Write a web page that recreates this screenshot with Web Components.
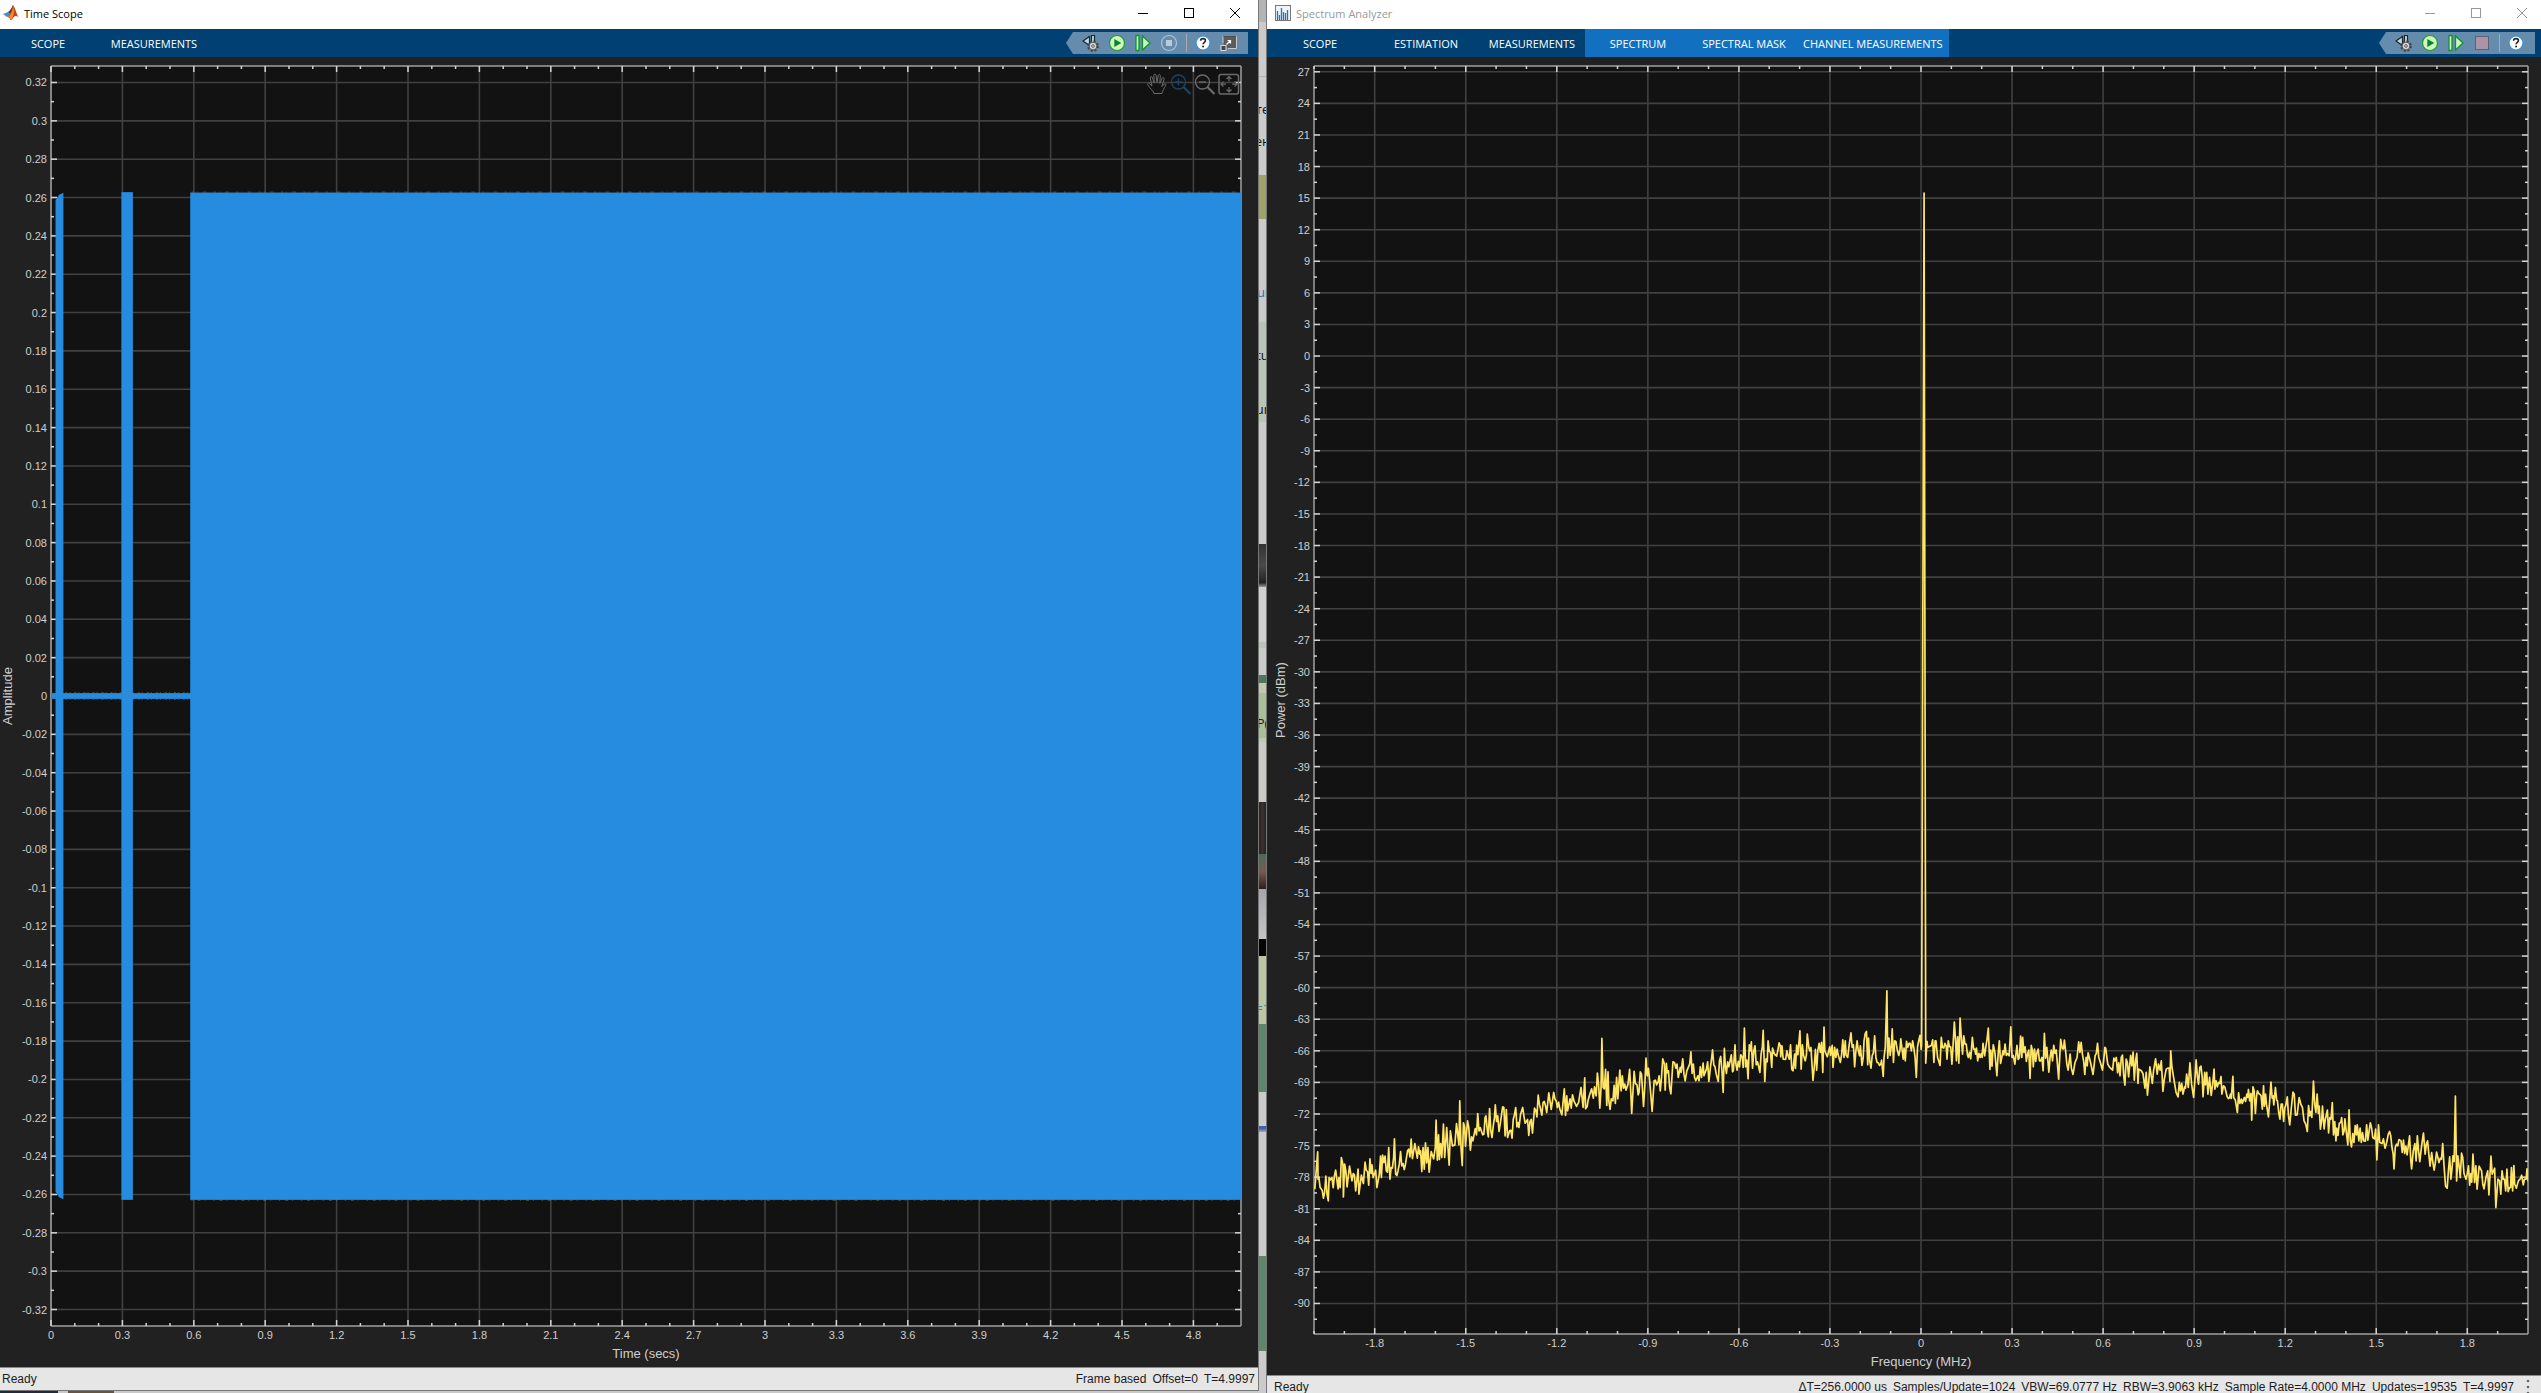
<!DOCTYPE html>
<html lang="en">
<head>
<meta charset="utf-8">
<title>Time Scope and Spectrum Analyzer</title>
<style>
  html, body { margin: 0; height: 100%; overflow: hidden; background: #c9c9c9; }
  body { font-family: "Liberation Sans", Arial, sans-serif; font-size: 12px; }
</style>
</head>
<body>
<scope-desktop>
  <scope-window slot="left" heading="Time Scope" logo="matlab">
    <tool-strip slot="strip" tabs="SCOPE,MEASUREMENTS" tools="settings,play,step,stopring,|,help,undock"></tool-strip>
    <axes-plot slot="plot" kind="time" controls></axes-plot>
    <status-bar slot="status" items="Frame based;Offset=0;T=4.9997"></status-bar>
  </scope-window>
  <desktop-sliver slot="gap"></desktop-sliver>
  <scope-window slot="right" heading="Spectrum Analyzer" logo="bars" inactive>
    <tool-strip slot="strip" tabs="SCOPE,ESTIMATION,MEASUREMENTS,*SPECTRUM,*SPECTRAL MASK,*CHANNEL MEASUREMENTS" tools="settings,play,step,stopbox,|,help"></tool-strip>
    <axes-plot slot="plot" kind="spectrum"></axes-plot>
    <status-bar slot="status" menu items="ΔT=256.0000 us;Samples/Update=1024;VBW=69.0777 Hz;RBW=3.9063 kHz;Sample Rate=4.0000 MHz;Updates=19535;T=4.9997"></status-bar>
  </scope-window>
</scope-desktop>

<script>
const ICONS = {
  matlab: `<svg width="16" height="16" viewBox="0 0 16 16"><path d="M0 9l5-2 2 2-3 3z" fill="#4a90c8"/><path d="M5 7c2-1 3-4 5-6L7 10l-3 2 3-3z" fill="#23406b"/><path d="M10 0c2 2 3 8 5.500 12-3-2-4-1-5.500 1C9 15 8 15 7 15c0-2-1-3-3-3 3-1 4-8 6-12z" fill="#c8401c"/><path d="M10 0c-1 6-1 9-5 12 2 0 2.500 1.500 2.500 3 2-1 3-4 3.500-8z" fill="#ef8a32"/><path d="M10 0c-1 2-1.500 5-3 8 1 0 2-2 3-8z" fill="#7a1f16"/></svg>`,
  bars: `<svg width="16" height="16" viewBox="0 0 16 16"><rect x=".5" y=".5" width="15" height="15" fill="#eef4f8" stroke="#777"/><path d="M2.500 6v9M4.500 10v5M6.500 3v12M8.500 7v8M10.500 8v7M12.500 5v10" stroke="#2277b5" stroke-width="1.300"/></svg>`,
  settings: `<svg width="18" height="18" viewBox="0 0 18 18"><path d="M7.500 2.500v9L1 7z" fill="#b9dcf5" stroke="#222" stroke-width="1.200"/><path d="M9.500 1.500h3v7h-3z" fill="#b9dcf5" stroke="#222" stroke-width="1.200"/><g transform="translate(11 12)"><circle r="4.600" fill="none" stroke="#444" stroke-width="2.600" stroke-dasharray="2 1.610"/><circle r="3.900" fill="#d5d5d5" stroke="#444" stroke-width=".9"/><circle r="1.300" fill="#fff" stroke="#444" stroke-width=".9"/></g></svg>`,
  play: `<svg width="18" height="18" viewBox="0 0 18 18"><circle cx="9" cy="9" r="7.500" fill="#ccf7bf" stroke="#1d9b2c" stroke-width="1.200"/><path d="M6.300 5l7 4-7 4z" fill="#0b8424"/></svg>`,
  step: `<svg width="18" height="18" viewBox="0 0 18 18"><path d="M2 1.500h3v15H2zM8.500 2l7.500 7-7.500 7z" fill="#ccf7bf" stroke="#0f9427" stroke-width="1.300"/></svg>`,
  stopring: `<svg width="18" height="18" viewBox="0 0 18 18"><circle cx="9" cy="9" r="7.500" fill="none" stroke="#a9c3da" stroke-width="1.200"/><rect x="6" y="6" width="6" height="6" fill="#b9cad9"/></svg>`,
  stopbox: `<svg width="18" height="18" viewBox="0 0 18 18"><rect x="2.500" y="2.500" width="13" height="13" fill="#ab94a6" stroke="#5f6076"/></svg>`,
  help: `<svg width="18" height="18" viewBox="0 0 18 18"><circle cx="9" cy="9" r="7" fill="#fff" stroke="#3b8fd8" stroke-width="1.200"/><path d="M6.600 6.800q0-2.200 2.400-2.200t2.400 2q0 1.200-1.300 2-1 .6-1 1.700" fill="none" stroke="#222" stroke-width="1.600"/><circle cx="9.100" cy="12.600" r="1" fill="#222"/></svg>`,
  undock: `<svg width="18" height="18" viewBox="0 0 18 18"><path d="M3 9.500V1.500h13.500v13H8" fill="#5c5c5c" stroke="#c8c8c8"/><path d="M3 2h13.500" stroke="#444"/><rect x="1" y="11.500" width="5" height="5" fill="#444" stroke="#ddd"/><path d="M6.500 10.500l4-4M7.500 6.500h3v3" fill="none" stroke="#fff" stroke-width="1.200"/></svg>`,
  hand: `<svg width="22" height="22" viewBox="0 0 22 22"><path d="M8 20.500c-1-3-4-5-6.500-9 0-1.500 1.500-1.500 2.200-.8L6 13 4.200 4.800c0-1.500 1.800-1.500 2.200-.2L8.200 10 7.800 2.300c.2-1.500 2-1.500 2.300 0L11 9.500l1.200-7c.4-1.400 2.100-1.200 2.100.3l-.5 7.400 2.400-5c.7-1.200 2.300-.5 1.900.9l-2.300 7.400 2.300-2.400c1.200-.8 2.200.3 1.500 1.500-2 3-2.600 5-3.600 7.900z" fill="none" stroke="currentColor"/></svg>`,
  zoomin: `<svg width="22" height="22" viewBox="0 0 22 22"><circle cx="8.500" cy="9" r="7" fill="none" stroke="currentColor" stroke-width="1.300"/><path d="M5 9h7M8.500 5.500v7" stroke="currentColor" stroke-width="1.300"/><path d="M13.500 14l7 7" stroke="currentColor" stroke-width="2.200"/></svg>`,
  zoomout: `<svg width="22" height="22" viewBox="0 0 22 22"><circle cx="8.500" cy="9" r="7" fill="none" stroke="currentColor" stroke-width="1.300"/><path d="M5 9h7" stroke="currentColor" stroke-width="1.300"/><path d="M13.500 14l7 7" stroke="currentColor" stroke-width="2.200"/></svg>`,
  fit: `<svg width="22" height="22" viewBox="0 0 22 22"><rect x="1" y="1.500" width="19.500" height="19.500" rx="2" fill="none" stroke="currentColor" stroke-width="1.500"/><path d="M11 3.500v5M8.500 6L11 3.500 13.500 6M11 19v-5M8.500 16.500L11 19l2.500-2.500M3 11.200h5M5.500 8.700L3 11.200l2.500 2.500M19 11.200h-5M16.500 8.700l2.500 2.500-2.500 2.500" fill="none" stroke="currentColor" stroke-width="1.200"/></svg>`,
  min: `<svg width="12" height="12" viewBox="0 0 12 12"><path d="M1 6.500h10" stroke="currentColor"/></svg>`,
  max: `<svg width="12" height="12" viewBox="0 0 12 12"><rect x="1.500" y="1.500" width="9" height="9" fill="none" stroke="currentColor"/></svg>`,
  close: `<svg width="12" height="12" viewBox="0 0 12 12"><path d="M1 1l10 10M11 1L1 11" stroke="currentColor"/></svg>`
};
const NAMES = { settings: 'Settings', play: 'Run', step: 'Step forward', stopring: 'Stop', stopbox: 'Stop', help: 'Help', undock: 'Undock', hand: 'Pan', zoomin: 'Zoom in', zoomout: 'Zoom out', fit: 'Fit to view', min: 'Minimize', max: 'Maximize', close: 'Close' };
const iconButton = n => `<button type="button" aria-label="${NAMES[n]}" class="${n}">${ICONS[n]}</button>`;
const RESET = `:host,*{box-sizing:border-box} button{appearance:none;border:0;background:none;padding:0;margin:0;color:inherit;font:inherit;display:flex;align-items:center;justify-content:center} svg{display:block}`;

class ScopeElement extends HTMLElement {
  constructor() { super(); this.attachShadow({ mode: 'open' }); }
  connectedCallback() { this.shadowRoot.innerHTML = `<style>${RESET}</style>` + this.view(); }
}

customElements.define('scope-desktop', class extends ScopeElement {
  view() {
    return `<style>
      :host{display:grid;grid-template-columns:minmax(0,1259fr) 7px minmax(0,1275fr);height:100vh;overflow:hidden}
      .left{display:flex;flex-direction:column;min-height:0;margin-left:-5px}
      .left slot{display:flex;flex:1;min-height:0}
      .under{flex:none;height:2px;margin-left:5px;display:flex;gap:10px}
      .under i{height:2px;background:#1f2a3d;width:58px}.under i+i{background:#6b5238;width:46px}
      .right{display:flex;min-height:0;margin:0 -4px -5px 0}
      .gap{display:flex;min-height:0;overflow:hidden}
      ::slotted(*){flex:1;min-width:0;min-height:0}
    </style>
    <div class="left"><slot name="left"></slot><div class="under"><i></i><i></i></div></div>
    <div class="gap"><slot name="gap"></slot></div>
    <div class="right"><slot name="right"></slot></div>`;
  }
});

/* The narrow piece of the desktop that shows between the two windows. */
customElements.define('desktop-sliver', class extends ScopeElement {
  view() {
    const parts = [
      [22,'#b4b4b4'],[54,'#cbcbcb'],[1,'#b0b0b0'],[24,'#cbcbcb'],[16,'#cbcbcb',['те','#111']],[16,'#cbcbcb'],[16,'#cbcbcb',['ен','#111']],[26,'#cbcbcb'],
      [44,'#9fa36a'],[65,'#cacaca'],[16,'#cacaca',['ui','#2a72b5']],[22,'#cacaca'],[25,'#b8c6b7'],[16,'#b8c6b7',['tu','#111']],[38,'#b8c6b7'],[16,'#b8c6b7',['ur','#111']],[5,'#b8c6b7'],
      [122,'#cbcbcb'],[43,'linear-gradient(#333,#4a4a4a 50%,#222 90%,#999)'],[55,'#cfcfd2'],[6,'#b9c6b5'],[27,'#cbcbcb'],
      [8,'#4a7a5c'],[10,'#c0c9ae'],[22,'#a9bf98'],[16,'#a9bf98',['P(','#14202e']],[7,'#a9bf98'],[4,'#c0c9ae'],[60,'#cbcbc6'],
      [52,'linear-gradient(90deg,#252525,#3c3030,#222)'],[35,'linear-gradient(#4a6a5c,#7a5a50,#2a2020)'],[50,'linear-gradient(#a5a7aa,#c2c4c6)'],[17,'#060606'],
      [44,'#bcc6a5'],[16,'#bcc6a5',['=1','#2a86b8']],[8,'#bcc6a5'],[68,'#5d866b'],[34,'#cbcbcb'],[6,'linear-gradient(#3f62b0 40%,#a8a8a8)'],[124,'#cbcbcb'],[95,'#5d866b'],[42,'#cbcbcb']
    ];
    return `<style>
      :host{display:flex;flex-direction:column;overflow:hidden;font:13px "Open Sans",sans-serif}
      div{display:flex;align-items:center;justify-content:center;min-height:0;overflow:hidden;white-space:nowrap;line-height:16px}
    </style>` + parts.map(([h, c, t]) => `<div style="flex:${h} 1 0;background:${c}${t ? ';color:' + t[1] : ''}">${t ? `<span>${t[0]}</span>` : ''}</div>`).join('');
  }
});

customElements.define('scope-window', class extends ScopeElement {
  view() {
    return `<style>
      :host{display:grid;grid-template-rows:29px 28px minmax(0,1fr) auto;background:#212121;border-right:1px solid #777;border-bottom:1px solid #777}
      :host([inactive]){border:0;border-left:1px solid #777}
      header{display:flex;align-items:center;background:#fff;color:#000;padding-left:8px;height:29px}
      :host([inactive]) header{color:#999}
      h1{font:11px/16px "Open Sans",sans-serif;margin:0 0 0 5px;padding-bottom:2px;flex:1;white-space:nowrap}
      header > svg{flex:none;margin-top:-3px}
      header button{width:46px;height:26px;align-self:flex-start}
      ::slotted(*){min-width:0;min-height:0}
    </style>
    <header>${ICONS[this.getAttribute('logo')]}<h1>${this.getAttribute('heading')}</h1>${['min', 'max', 'close'].map(iconButton).join('')}</header>
    <slot name="strip"></slot><slot name="plot"></slot><slot name="status"></slot>`;
  }
});

customElements.define('tool-strip', class extends ScopeElement {
  view() {
    const tabs = this.getAttribute('tabs').split(',').map(t => t[0] === '*'
      ? `<button type="button" role="tab" class="ctx">${t.slice(1)}</button>` : `<button type="button" role="tab">${t}</button>`).join('');
    const tools = this.getAttribute('tools').split(',').map(t => t === '|' ? '<i></i>' : iconButton(t)).join('');
    return `<style>
      :host{display:flex;align-items:center;justify-content:space-between;background:#004072;color:#fff}
      nav{display:flex;height:100%}
      nav button{min-width:106px;padding:2px 6px 0;font:11px/16px "Open Sans",sans-serif;white-space:nowrap}
      nav .ctx{background:#1171c0}
      .tools{display:flex;align-items:center;height:22px;margin-right:10px;padding:0 6px 0 12px;background:#668cad;clip-path:polygon(7px 0,100% 0,100% 100%,7px 100%,0 50%)}
      .tools button{width:26px;height:22px}
      .tools i{width:1px;height:18px;margin:0 3px 0 4px;background:#b0a8a4}
    </style><nav role="tablist">${tabs}</nav><div class="tools">${tools}</div>`;
  }
});

customElements.define('status-bar', class extends ScopeElement {
  view() {
    const items = this.getAttribute('items').split(';').map(t => `<span>${t}</span>`).join('');
    return `<style>
      :host{display:flex;align-items:center;height:23px;background:#e6e6e6;border-top:1px solid #8a8a8a;color:#1c1c1c;font-size:12px;line-height:16px;padding:0 3px 0 7px;white-space:nowrap}
      .info{display:flex;gap:6px;margin-left:auto}
      .menu{width:28px;height:20px}
    </style><span>Ready</span><div class="info">${items}</div>${this.hasAttribute('menu')
      ? `<button type="button" class="menu" aria-label="More"><svg width="4" height="18" fill="#666"><circle cx="2" cy="3" r="1.300"/><circle cx="2" cy="9" r="1.300"/><circle cx="2" cy="15" r="1.300"/></svg></button>` : ''}`;
  }
});

/* Power trace, negative-frequency side and positive-frequency side. */
const TRACE_A = `37,685 44,573 45,655 47,650 50,680 55,688 58,712 61,695 64,646 67,700 70,720 72,650 75,657 79,650 82,680 85,645 88,628 94,684 96,650 99,680 102,590 106,612 107,708 110,610 113,630 116,678 122,616 128,660 131,638 134,642 137,690 143,625 145,700 151,643 156,668 160,604 163,628 166,632 169,673 172,594 175,638 177,612 180,650 186,628 189,680 195,640 198,586 200,650 203,583 206,605 209,586 212,630 215,634 218,560 221,655 224,620 227,622 230,590 232,534 235,640 238,644 241,628 244,610 247,572 250,615 253,608 256,626 259,610 264,570 267,565 270,588 273,535 276,593 282,548 288,592 291,558 294,580 296,570 299,632 302,560 305,625 308,546 311,606 314,560 317,634 322,572 328,594 332,560 334,478 337,598 340,522 342,596 345,548 348,590 352,490 355,590 360,500 363,560 366,613 369,510 374,555 380,552 384,488 390,552 392,420 395,560 398,614 401,486 404,500 406,556 411,480 414,500 418,568 421,528 424,540 430,503 433,522 436,458 439,510 442,500 448,522 451,520 454,470 456,465 460,515 462,528 465,443 468,510 471,530 474,495 477,470 479,432 482,482 485,465 488,512 491,490 497,438 500,440 503,525 506,446 509,530 514,510 517,508 520,532 523,475 526,462 529,440 532,498 535,485 537,500 541,460 546,440 549,465 552,487 555,482 558,476 561,524 564,482 567,476 570,517 575,442 578,448 581,468 584,403 587,430 593,463 596,425 599,422 602,436 605,455 610,396 616,446 622,395 625,415 628,420 631,440 634,424 637,445 642,462 648,384 651,464 654,405 656,450 662,414 665,442 668,402 672,422 678,437 683,425 689,380 694,440 698,351 700,444 704,437 706,420 710,402 715,384 719,412 722,378 726,405 729,337 732,372 735,442 738,380 740,233 743,380 746,384 749,326 752,434 755,333 757,420 760,446 763,414 767,420 770,374 773,428 776,350 779,414 784,328 787,390 790,345 793,382 796,370 799,388 804,370 808,326 811,400 813,458 819,332 822,368 826,372 829,402 831,395 834,333 837,340 842,437 845,380 848,292 851,345 854,323 857,360 860,405 863,452 868,360 871,358 874,372 878,362 880,345 883,390 886,350 889,294 893,310 895,388 898,308 900,336 903,330 906,380 909,399 914,303 918,306 921,322 924,310 927,350 932,320 934,335 938,294 941,340 944,360 948,330 955,310 958,273 961,338 964,310 967,350 970,360 975,345 978,360 981,318 984,350 988,307 990,345 996,325 999,303 1002,362 1006,318 1008,300 1011,267 1014,312 1017,318 1020,340 1025,362 1028,300 1031,287 1034,330 1037,395 1040,263 1042,310 1045,338 1048,303 1051,318 1057,282 1060,333 1062,330 1066,252 1068,308 1071,328 1074,302 1077,318 1080,282 1084,290 1086,320 1089,202 1092,318 1095,298 1098,354 1101,252 1104,270 1106,243 1109,322 1112,270 1115,255 1118,312 1121,303 1124,318 1127,335 1130,280 1133,258 1135,209 1139,362 1142,294 1145,303 1147,240 1150,272 1153,275 1156,320 1158,262 1161,275 1164,282 1168,286 1171,268 1174,246 1177,255 1178,288 1181,255 1184,295 1190,296 1193,270 1196,285 1199,295 1202,252 1205,325 1208,330 1212,280 1214,323 1217,253 1220,282 1225,210 1228,325 1231,252 1234,285 1238,300 1241,282 1243,220 1247,262 1249,270 1252,260 1255,320 1257,359 1260,320 1263,266 1266,328 1269,268 1272,248 1275,275 1278,245 1281,335 1284,199 1286,270 1292,288 1298,258 1300,284 1304,254 1306,320 1310,260 1313,290 1316,265 1318,280 1324,305 1327,282 1330,237 1333,290 1336,240 1338,283 1342,290 1345,258 1350,216 1353,260 1356,252 1359,318 1362,270 1365,240 1368,270 1371,285 1373,255 1377,314 1380,290 1382,240 1385,218 1388,212 1391,312 1393,232 1396,302 1399,322 1402,285 1405,275 1408,225 1411,290 1414,305 1417,306 1420,314 1423,310 1425,298 1429,347 1431,290 1434,260 1438,90 1440,292 1443,232 1446,284 1449,255 1451,204 1454,305 1457,240 1460,242 1463,265 1467,284 1470,268 1472,234 1475,265 1478,295 1480,262 1483,300 1486,242 1489,260 1492,248 1495,248 1498,270 1501,240 1504,262 1507,290 1510,350 1513,258 1516,240 1519,224 1522,266 1523,250 1529,-2301`;
const TRACE_B = `63,307 66,242 68,260 73,256 77,254 80,237 83,305 86,240 88,240 92,290 98,314 101,230 104,260 107,262 110,248 113,255 115,295 118,240 121,258 124,258 127,310 130,250 133,184 136,240 138,300 141,228 144,307 147,172 150,230 153,280 156,225 159,250 162,250 165,282 167,290 170,275 173,294 177,230 180,265 183,265 185,280 187,262 190,300 193,278 196,290 199,278 201,290 203,248 207,285 210,258 213,235 216,202 220,326 222,268 225,316 228,252 232,275 237,345 240,280 243,240 246,308 249,290 252,270 254,282 257,250 260,284 263,278 267,285 271,198 274,290 277,284 281,310 286,254 289,296 292,290 295,226 298,290 300,230 303,275 306,258 309,302 312,280 315,268 318,353 321,254 324,270 326,318 329,265 332,302 335,275 338,265 341,300 344,300 347,290 350,330 353,218 356,292 359,260 362,305 364,334 367,290 370,268 373,300 376,254 379,278 382,268 385,310 388,355 391,280 393,236 397,264 400,264 402,238 405,270 408,310 411,328 416,280 419,322 423,341 428,305 433,290 437,243 440,275 443,245 446,280 449,300 452,341 455,290 458,315 460,276 466,305 472,341 475,310 477,285 480,278 483,248 486,290 490,305 495,328 498,300 501,260 503,262 508,310 513,320 520,328 523,292 526,300 529,290 532,336 535,306 538,345 541,290 544,283 547,345 550,373 553,295 556,305 559,348 562,310 564,284 567,315 570,274 573,358 576,300 579,278 582,368 584,325 590,330 594,338 599,382 602,335 605,403 608,365 611,318 617,368 620,330 625,294 629,340 632,310 636,328 639,300 643,392 646,358 651,325 655,322 658,322 660,362 662,270 665,320 669,350 675,395 680,408 683,365 686,390 689,368 692,400 696,378 698,382 701,340 705,380 709,306 713,370 718,410 721,360 724,297 727,345 730,370 733,320 736,316 739,350 741,408 745,335 747,372 750,335 753,400 757,350 761,404 765,365 768,325 770,385 773,360 776,378 779,365 782,368 785,347 787,400 791,375 794,378 800,408 803,413 806,410 808,400 810,413 814,347 816,410 820,418 825,455 828,396 831,428 835,415 837,428 842,410 845,422 848,400 850,410 852,386 855,420 858,398 860,478 863,378 866,390 869,458 872,405 874,390 877,398 880,400 883,405 886,445 889,375 891,436 894,400 896,430 901,468 904,420 907,364 910,412 912,405 914,432 918,380 921,418 923,420 926,455 929,475 932,430 935,430 938,482 941,440 943,436 947,408 950,465 953,492 957,440 961,394 964,400 967,463 971,462 976,410 980,430 984,440 988,480 992,490 996,512 999,434 1002,465 1005,452 1007,470 1011,361 1014,430 1017,455 1020,400 1023,458 1025,436 1028,505 1031,480 1033,436 1037,504 1040,475 1045,448 1048,516 1051,470 1054,475 1057,425 1060,522 1063,482 1066,540 1068,502 1071,524 1074,488 1078,484 1080,470 1083,522 1086,510 1088,474 1091,510 1095,552 1098,447 1101,540 1104,558 1107,518 1110,545 1113,494 1116,522 1118,492 1122,540 1125,502 1128,545 1131,515 1134,540 1138,541 1141,492 1144,538 1150,486 1153,500 1156,530 1160,534 1163,505 1166,597 1170,492 1173,545 1179,548 1182,534 1186,562 1190,545 1194,520 1197,512 1200,525 1203,560 1206,580 1208,624 1211,560 1214,550 1217,555 1220,536 1225,540 1228,575 1231,538 1234,578 1237,556 1240,582 1246,525 1249,600 1251,624 1255,570 1259,548 1262,600 1265,525 1268,570 1271,602 1276,550 1280,517 1284,580 1287,550 1290,540 1293,580 1296,616 1300,575 1303,605 1306,628 1309,605 1312,574 1318,605 1321,592 1324,595 1327,548 1330,610 1334,676 1338,682 1341,630 1344,588 1347,655 1350,620 1352,585 1355,602 1358,406 1361,660 1364,585 1367,615 1370,650 1373,577 1376,590 1379,638 1384,655 1387,640 1390,615 1393,673 1396,638 1398,664 1401,580 1405,665 1408,615 1411,685 1416,616 1422,630 1425,670 1428,684 1433,648 1437,630 1440,702 1445,586 1448,640 1454,622 1457,740 1462,655 1466,660 1469,700 1472,630 1475,655 1478,655 1481,690 1484,625 1487,692 1490,680 1493,680 1495,620 1498,690 1501,614 1503,670 1507,682 1512,660 1516,655 1520,643 1524,672 1527,655 1531,655 1533,624 1536,662`;
const tracePoints = () => TRACE_A + ' ' + TRACE_B.split(' ').map(p => { const [x, y] = p.split(','); return (x * 1.0016 + 1470).toFixed(1) + ',' + y; }).join(' ');

const PLOTS = {
  time: {
    left: 56, labelAt: 17, x: [0, 5], y: [-0.3286, 0.3286],
    xTick: [0, 4.8, 0.3, 3, 10], yTick: [-0.32, 0.32, 0.02, 2, 100],
    xLabel: 'Time (secs)', yLabel: 'Amplitude',
    data: `<svg width="100%" height="100%" viewBox="0 -3286 5000 6572" preserveAspectRatio="none">
      <g fill="#268ce0"><rect x="0" y="-15" width="600" height="30"/>
      <path d="M19-2585L34-2615 52-2625V2625L34 2615 19 2585z"/><rect x="296" y="-2628" width="48" height="5256"/><rect x="585" y="-2626" width="4415" height="5254"/></g>
      <g fill="none" stroke="#8f9a50" stroke-width="6" opacity=".4"><path d="M590-2629H5000" stroke-dasharray="9 13 4 22 15 31"/><path d="M590 2631H5000" stroke-dasharray="5 21 12 17 4 33"/><path d="M60-18H580M60 18H580" stroke-dasharray="9 8 5 16"/></g></svg>`
  },
  spectrum: {
    left: 47, labelAt: 18, x: [-2, 2], y: [-92.9, 27.55],
    xTick: [-1.8, 1.8, 0.3, 3, 10], yTick: [-90, 27, 3, 2, 1],
    xLabel: 'Frequency (MHz)', yLabel: 'Power (dBm)',
    data: `<svg width="100%" height="100%" viewBox="35 -2682 2973 3801" preserveAspectRatio="none"><polyline points="${tracePoints()}" fill="none" stroke="#ffe565" stroke-width="1.7" stroke-linejoin="round" vector-effect="non-scaling-stroke"/></svg>`
  }
};

customElements.define('axes-plot', class extends ScopeElement {
  view() {
    const p = PLOTS[this.getAttribute('kind')];
    const px = v => ((v - p.x[0]) / (p.x[1] - p.x[0]) * 100).toFixed(3) + '%';
    const py = v => ((p.y[1] - v) / (p.y[1] - p.y[0]) * 100).toFixed(3) + '%';
    const at = (x, y, s) => `<svg x="${x}" y="${y}" overflow="visible">${s}</svg>`;
    const name = (v, k) => String(Math.round(v * k) / k);
    let grid = '', ticks = '', text = '';
    const sweep = ([from, to, step, sub, k], [lo, hi], fn) => {
      const n = Math.round((to - from) / step);
      for (let i = -sub; i <= (n + 1) * sub; i++) {
        const v = from + i * step / sub;
        if (v < lo - 1e-9 || v > hi - step / 1000) continue;
        fn(v, i % sub === 0, name(v, k));
      }
    };
    sweep(p.xTick, p.x, (v, major, t) => {
      const n = major ? 6 : 3;
      if (major) {
        grid += `<line x1="${px(v)}" x2="${px(v)}" y1="0" y2="100%"/>`;
        text += at(px(v), '100%', `<text y="13" text-anchor="middle">${t}</text>`);
      }
      ticks += at(px(v), 0, `<path d="M0 0v${n}"/>`) + at(px(v), '100%', `<path d="M0 0v-${n}"/>`);
    });
    sweep(p.yTick, p.y, (v, major, t) => {
      const n = major ? 6 : 3;
      if (major) {
        grid += `<line y1="${py(v)}" y2="${py(v)}" x1="0" x2="100%"/>`;
        text += at(0, py(v), `<text x="-4" y="4" text-anchor="end">${t}</text>`);
      }
      ticks += at(0, py(v), `<path d="M0 0h${n}"/>`) + at('100%', py(v), `<path d="M0 0h-${n}"/>`);
    });
    text += at('50%', '100%', `<text class="name" y="32" text-anchor="middle">${p.xLabel}</text>`);
    text += at(0, '50%', `<text class="name" transform="translate(${p.labelAt - p.left} 0) rotate(-90)" text-anchor="middle">${p.yLabel}</text>`);
    return `<style>
      :host{display:flex;position:relative;background:#212121;padding:9px 17px 41px ${p.left}px}
      .plot{flex:1;width:100%;height:100%;min-width:0;overflow:visible}
      .grid line{stroke:#404040;stroke-width:1.6}
      .ticks path{stroke:#d4d4d4;stroke-width:1.5;fill:none}
      .frame line{stroke:#a0a0a0;stroke-width:1.5}
      text{fill:#cfcfcf;font:11px "Liberation Sans",Arial,sans-serif}
      text.name{font-size:13px}
      .controls{position:absolute;top:16px;right:18px;display:flex;gap:2px;color:#6c6c6c}
      .controls button{width:22px;height:22px}
      .controls .zoomin{color:#1d4468}
    </style>
    <svg class="plot" role="img" aria-label="${p.yLabel} against ${p.xLabel}">
      <rect width="100%" height="100%" fill="#121212"/>
      <g class="grid">${grid}</g>
      <g class="frame"><line x1="0" x2="0" y1="0" y2="100%"/><line x1="100%" x2="100%" y1="0" y2="100%"/><line x1="0" x2="100%" y1="0" y2="0"/><line x1="0" x2="100%" y1="100%" y2="100%"/></g>
      <g class="ticks">${ticks}</g>
      ${p.data}
      ${text}
    </svg>
    ${this.hasAttribute('controls') ? `<div class="controls">${['hand', 'zoomin', 'zoomout', 'fit'].map(iconButton).join('')}</div>` : ''}`;
  }
});
</script>
</body>
</html>
